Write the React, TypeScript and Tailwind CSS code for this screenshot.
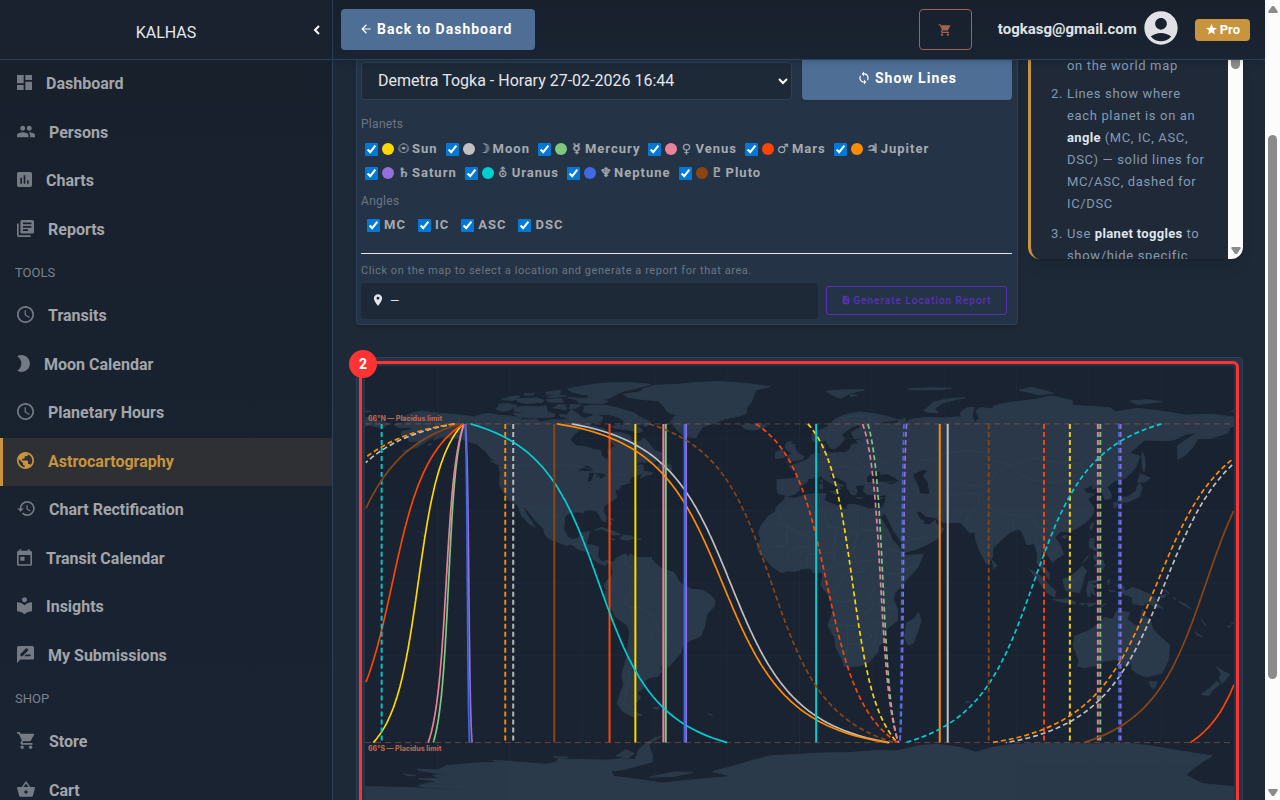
import React from 'react';
import type { IconType } from 'react-icons';
import {
  MdAccessTime,
  MdAccountCircle,
  MdArrowBack,
  MdBrightness2,
  MdDashboard,
  MdDescription,
  MdHistory,
  MdInsertChart,
  MdLibraryBooks,
  MdLocalLibrary,
  MdPeople,
  MdPlace,
  MdPublic,
  MdRateReview,
  MdShoppingBasket,
  MdShoppingCart,
  MdStar,
  MdSync,
  MdToday,
} from 'react-icons/md';

interface NavItem {
  label: string;
  icon: IconType;
  // part of the 24x24 icon grid that holds the glyph
  box: [number, number, number, number];
  active?: boolean;
}

interface Planet {
  name: string;
  glyph: string;
  color: string;
  mc: number;
  dec: number;
  thin?: boolean;
}

const mainItems: NavItem[] = [
  { label: 'Dashboard', icon: MdDashboard, box: [3, 3, 18, 18] },
  { label: 'Persons', icon: MdPeople, box: [1, 3, 22, 18] },
  { label: 'Charts', icon: MdInsertChart, box: [3, 3, 18, 18] },
  { label: 'Reports', icon: MdLibraryBooks, box: [2, 2, 20, 20] },
];

const toolItems: NavItem[] = [
  { label: 'Transits', icon: MdAccessTime, box: [2, 2, 20, 20] },
  { label: 'Moon Calendar', icon: MdBrightness2, box: [5, 2, 15, 20] },
  { label: 'Planetary Hours', icon: MdAccessTime, box: [2, 2, 20, 20] },
  { label: 'Astrocartography', icon: MdPublic, box: [2, 2, 20, 20], active: true },
  { label: 'Chart Rectification', icon: MdHistory, box: [1, 3, 21, 18] },
  { label: 'Transit Calendar', icon: MdToday, box: [3, 1, 18, 20] },
  { label: 'Insights', icon: MdLocalLibrary, box: [3, 2, 18, 20] },
  { label: 'My Submissions', icon: MdRateReview, box: [2, 2, 20, 20] },
];

const shopItems: NavItem[] = [
  { label: 'Store', icon: MdShoppingCart, box: [1, 2, 21, 20] },
  { label: 'Cart', icon: MdShoppingBasket, box: [1, 2, 22, 20] },
];

const planets: Planet[] = [
  { name: 'Sun', glyph: '☉', color: '#ffd700', mc: -68, dec: -8.05 },
  { name: 'Moon', glyph: '☽', color: '#c0c0c0', mc: 61.4, dec: 22.1 },
  { name: 'Mercury', glyph: '☿', color: '#7fc97f', mc: -55.4, dec: -2.8 },
  { name: 'Venus', glyph: '♀', color: '#e8829b', mc: -56.4, dec: -3.3, thin: true },
  { name: 'Mars', glyph: '♂', color: '#ff4500', mc: -78.7, dec: -12.3, thin: true },
  { name: 'Jupiter', glyph: '♃', color: '#ff8c00', mc: 58.1, dec: 22.5 },
  { name: 'Saturn', glyph: '♄', color: '#9370db', mc: -47, dec: 0.6 },
  { name: 'Uranus', glyph: '⛢', color: '#00ced1', mc: 6.9, dec: 19.6, thin: true },
  { name: 'Neptune', glyph: '♆', color: '#4169e1', mc: -47.6, dec: 0.4 },
  { name: 'Pluto', glyph: '♇', color: '#8b4513', mc: -101.6, dec: -19 },
];

const angles = ['MC', 'IC', 'ASC', 'DSC'];

// Coastlines as "lon,lat" pairs
const land = [
  // North America
  '-168,65.6 -166.5,66.3 -163,66.6 -162,67 -166.5,68.4 -163,69.5 -160,70.6 -156.6,71.3 -150,70.5 -141,69.7 -135,69 -131,70.1 -128,70.3 -124.5,69.6 -120,69.3 -115,68.5 -115.5,67.8 -109,68 -107.5,66.8 -102,67.8 -98,67.6 -96,68.2 -96,70.3 -94.5,72 -92.8,70.8 -91,69.5 -90,68.4 -88,68.5 -85,69.8 -81.5,69 -82,67 -86.5,66.3 -87,64.5 -91,63.5 -93,62 -94.7,60 -94.7,58.8 -92.5,57 -88,56.5 -85,55.3 -82.3,55.1 -82,52.9 -80,51.2 -78.8,52.5 -79.5,54.7 -76.6,57 -78.5,59 -77.5,62.5 -73.7,62.4 -70,61 -69.5,59 -66,58.8 -64.5,60.3 -62,57.5 -60,55 -57,54 -55.7,52.3 -58.5,51.3 -60,50.2 -66.5,50.2 -69,48.5 -65,49.2 -64.5,47.5 -64.8,46.5 -61,45.8 -61,45.2 -63.5,44.6 -66,43.5 -64.8,45.5 -67,44.8 -70,43.7 -70.7,42 -70,41.7 -74,40.6 -74.2,39.5 -75.2,38.7 -76.3,39 -76,37 -75.7,35.3 -77.8,34 -79.3,33 -81,31.8 -81.3,30 -80,27 -80.4,25.3 -81.8,26 -82.8,28 -84,30 -86,30.4 -89,30.3 -89.5,29.2 -91.5,29.5 -94.7,29.4 -97.2,27.7 -97.5,25 -97.8,22.5 -96,19.3 -94.5,18.2 -91.8,18.5 -90.5,20.8 -87,21.4 -87.7,18.5 -88.5,16 -86,15.9 -83.2,15 -83.7,11 -81.8,8.9 -79.6,9.5 -77.4,8.6 -78,7.3 -80,8.7 -80.5,7.4 -83,8.3 -85.6,9.9 -85.8,11 -87.6,13 -91.5,14 -94.5,16.2 -96.5,15.7 -100,17 -103.5,18.3 -105.5,20.2 -105.8,22.5 -109.2,25.8 -112.5,30 -114.7,31.7 -113,28.5 -111,25.5 -109.5,23.2 -112,24.7 -115,27.8 -116,30.3 -117,32.5 -120.6,34.5 -122.5,37.5 -124.3,40.4 -124,46 -124.7,48.3 -122.5,48.5 -127,51 -130,54.5 -133.5,57.5 -137,58.7 -141,60 -144,60 -148,60.6 -151.7,59.2 -150.5,61.2 -154,59.3 -158,56.5 -162.5,55 -164.5,54.7 -160,56 -157.3,58.8 -162,58.8 -162,60 -165,61.3 -164.7,63 -161,63.6 -161,64.5 -166,64.5',
  // Arctic islands
  '-118.5,70.4 -112,70.6 -118,71.3 -118,72.6 -114,73.3 -108,73 -105,73.5 -104.5,71 -101.5,70 -101.5,69 -105,68.6 -113,68.6 -117,69.2',
  '-125.5,72 -123,71.2 -120.5,71.6 -117,73.5 -121,74.5 -124.5,74.2',
  '-89.5,73.3 -85,73.8 -80.5,73.7 -76,72.8 -72,71.6 -68,70.4 -66.8,69.2 -62,66.9 -61.5,66.5 -63.5,64.8 -65.5,65.7 -68,66.3 -64.8,63.2 -66.5,62.3 -71.5,63.7 -77,64.3 -78,65 -73.5,65.5 -72.5,67.2 -75,68.7 -79,70 -85,70 -89.5,71 -89,73',
  '-96,76.9 -89.5,76.5 -83,76.3 -79.5,75.4 -81,74.5 -91.5,74.8 -92.5,76',
  '-91,78.3 -87,77.9 -88,76.9 -80,76.3 -78,77 -75.5,78.5 -72,79.8 -64.5,81.5 -61.5,82.4 -70,83.1 -80,83 -87,82.2 -92,81.2 -88,80.4 -85,79.5',
  '-96,80.5 -92,81.3 -87,80.4 -86,79 -88.5,78.3 -94,79',
  '-100,74 -97,73.8 -96.5,71.8 -102,72.7 -100.5,73.6',
  '-95,74 -90.5,73.9 -92,72.7 -95.3,72.2',
  '-105,76 -98.5,76.6 -98,75 -104,75.1',
  '-117,76.3 -109,76.8 -106,75.9 -106.5,75 -113,74.5 -117,75.3',
  '-123.5,76.2 -119,77.4 -116,77.6 -116.5,76.5 -119,75.7',
  '-105,79.2 -99,79.9 -99.5,78 -105,78.4',
  '-104.5,77.3 -100,77.9 -96.5,77.6 -103,76.9',
  '-114,78.5 -110,78.7 -110,78.1 -114,77.9',
  '-87,65.6 -81,64 -80.3,63.5 -85,63.1 -87,63.7',
  '-99.5,69.9 -96,69.6 -95.5,68.8 -99,69',
  // Greenland
  '-73,78.3 -66,79.3 -65,80.5 -60,82 -50,82.4 -44,83.1 -33,83.6 -22,82.8 -12,81.5 -18,80 -19,77.5 -20,75 -22,72.5 -22,70.5 -25,69.2 -31,68.1 -36,66 -40,65 -43,60.2 -48,61 -51,63.8 -53.6,67 -51,69.7 -54.5,70.7 -56,73 -58.5,75.6 -65,76.1 -71,77',
  // smaller Atlantic and Caribbean islands
  '-24.3,65.5 -20.5,65.7 -16,66.5 -13.6,65 -18.5,63.4 -22.5,63.9',
  '-59.2,47.8 -57.5,50.7 -55.5,51.5 -56,49.8 -53.2,49 -53,46.8 -56,47',
  '-128.3,50.8 -125,50 -123.4,48.4',
  '-85,22 -82,23.1 -77,21.5 -74.2,20.2 -77.5,19.9 -78.3,21 -82,22.5',
  '-74.3,18.4 -73,19.9 -69.8,19.7 -68.4,18.6 -71.5,17.8',
  '-78.3,18.4 -76.3,18.2 -77.2,17.8', '-67.2,18.5 -65.6,18.3 -67.1,18',
  '-78.5,25 -77.8,24 -78,25.2', '-77.5,26.8 -77,26 -78.5,26.6',
  '-156,20.2 -155,19.5 -155.8,19', '-158.2,21.5 -157.7,21.2 -158.2,21.3', '-156.7,21 -156,20.8 -156.5,20.6',
  '-153,57.9 -152.2,57.4 -154,57',
  // South America
  '-77.4,8.6 -75.5,10.8 -72,12.3 -71.5,10.8 -70,12.1 -68,10.7 -62,10.7 -60,8.5 -57,6 -52,4.5 -50,1 -48,-.8 -44.5,-2.5 -40,-2.9 -37,-4.8 -35,-7 -35.3,-9.5 -38.5,-13 -39.2,-17.5 -41,-22 -45,-23.5 -48.5,-26 -49,-28.5 -52.2,-32.5 -54.5,-34.8 -58,-34.2 -57,-36.5 -58.5,-38.5 -62,-39 -65,-41 -63.7,-42.5 -67.3,-45.5 -65.8,-47.5 -69,-51 -68.4,-52.5 -70.5,-53 -68.3,-53.3 -65.2,-54.7 -69,-55.3 -73,-53.3 -75.5,-50 -74.5,-46.5 -72.8,-42 -73.6,-38 -71.5,-30 -70.3,-20 -71.5,-17.3 -76.2,-14 -79,-8.2 -81.2,-5.5 -80,-3 -81,-1 -79.9,1 -77.3,3.8 -77.8,7',
  '-61,-51.5 -58,-51.4 -59,-52.3', '-38,-54 -36,-54.8 -37,-54.3', '-61.8,10.7 -61,10.7 -61.4,10.1',
  // Europe and Asia
  '-9.3,43 -9.3,38.6 -8.8,37 -6.3,36.6 -5.5,36 -2,36.8 0,38.8 -.3,39.5 3.2,42 3.5,43.3 7.5,43.8 9,44.4 10.5,42.9 15.5,40 16,38 17,39 16.6,40.3 18.5,40.2 14,42.5 12.4,44.5 13.7,45.6 15.2,44 19.5,41.8 19.5,40 21.5,36.8 23,36.5 24,38 23,40.3 26,40.8 27,40 26.3,38.3 28,36.7 30.6,36.8 32.5,36 36,36.8 35.5,33.7 34.3,31.3 32.4,31.2 32.6,29.9 34.3,27.8 35,29.4 37,26 39.2,21.5 42.6,16.5 43.4,12.7 48,14 52.2,15.7 55.3,17.4 57.8,19 59.8,22.5 56.5,24.7 56.3,26.2 54,24.2 51.5,24.3 51.3,26 50,26.5 48.3,29.6 50,30 52,27.9 56.5,27 58,25.6 62,25.1 66.5,25.3 68,23.7 70.5,20.9 72.7,21.3 73,18 74.8,13 77.5,8.1 79.8,10.3 80.2,14.5 82.3,16.7 87,21 91,22.5 92.3,21 94.3,16 97.3,16.5 98.7,12 98.3,8.5 100.3,6 103.4,1.4 103.5,4 101.3,6.8 99.8,9.5 100.2,13.3 102.5,12.1 104.9,8.6 106.8,10.4 109.3,12 108,15.8 105.8,19 108.3,21.6 110.5,21.3 114.2,22.4 119,25.5 121.8,28.8 121.8,31.5 119.3,35 122.5,37 119,37.3 117.7,39 121.5,40.8 121.3,39 124.7,40 125.3,37.7 126.6,34.5 129.2,35.2 129,37.5 127.5,39.8 130.8,42.5 135,43.5 139,47.5 141,52.5 137,54 143,59.3 152,59 155,59.3 160,61.7 164.5,62.5 161.8,60.5 156.5,57 156.8,51.2 160,53.2 163,56.5 165,59.9 170.5,60 177.5,62.3 178.5,64.5 180,65 180,68.9 171,70 160,69.7 152,71 140,72.5 131,71 128.5,72.8 113,73.7 113,75.7 104.5,77.7 98,76.2 87,75 80.5,73.5 80,72.2 75,72.8 73,71.4 74.5,68.5 72.5,66.5 71.5,70 72.5,72.8 69.5,72.8 66.7,70.8 67,69 60,68.5 54,68.8 46.5,68 43.5,66.3 44,68.4 41,67.5 41,66.6 34.5,65.3 38,64 34,66.7 41,67.7 36,69.2 31,70.2 25,71 19,69.9 14.5,67.8 11,64.5 5.2,62 5.3,59 8,58 10.7,59.3 12.5,56 14.3,55.6 16.5,57 18.9,60 17.2,61.5 21.5,64.5 24.5,65.8 25.3,64.8 21.4,62.5 22.5,60 29.5,60 23.5,59.2 24.3,57.8 21.5,57.5 21,55.5 19,54.3 14,54 10.9,54.1 10.5,57.5 8.2,56.8 8.7,53.9 5,53.3 3.5,51.4 1.6,50.5 -1.5,49.5 -4.7,48.4 -1.2,46 -1.7,43.4',
  '-180,68.8 -175,67.4 -170,66.2 -173,64.3 -178.5,65.5 -180,65', '-180,71.5 -177.5,71.2 -180,70.9',
  '-5.6,50 -3,50.7 1.3,51.2 1.7,52.7 -.2,53.5 -1.7,55.5 -2,57.5 -4,57.6 -3,58.6 -5,58.5 -6,56.5 -4.8,54.8 -3,54 -4.7,52.8 -5,51.7 -3,51.4',
  '-10,51.7 -6.3,52.2 -6,54.5 -7.5,55.3 -10,54.2',
  '11,79.6 18,80.1 27,80.2 21,78.7 17,76.6 13.5,78', '21,78.3 24,77.8 21,77.4',
  '45,80.6 55,81 63,80.8 58,80.2 48,80.1',
  '51.5,71.5 55.5,75 61,76.3 68.5,76.9 60,75 56,72.5 57.5,70.6 53.5,70.8',
  '91,80 96,81.2 105,78.8 99.5,78', '137,75.5 144,76 150,75.2 140,74', '178.7,71.3 180,71.5 180,70.9',
  '8.2,41 9.7,41 9.5,39.2 8.5,39', '8.6,42.5 9.4,43 9.4,41.5', '12.5,38 15.6,38.2 15.1,36.7', '23.6,35.5 26.2,35.2 24,35', '32.4,35 34.5,35.6 33,34.6',
  '142,54.3 143,52 143.3,49 142.7,46 142,48 141.8,52',
  '141.2,45.4 145.3,43.6 143.2,42 140,41.7 140.5,43.5', '141,41.4 142,39.6 140.8,36 138.5,34.7 135.5,33.6 131.5,33.9 133,35.4 136,35.8 139.5,38.2 140,40.5', '130,33.5 131.8,33.5 131.2,31.3 130.2,31.4', '132.5,33.8 134.5,34.3 133.5,33',
  '120.2,23 121.5,25.2 121.9,24.8 120.9,22', '108.7,19.3 110.9,20 110,18.4', '79.8,9.6 81.8,7.3 80.5,6',
  // South-east Asia
  '95.3,5.6 98,4.5 101,2 104,-1.5 106,-3.2 105.8,-5.8 102.5,-4 98.7,1.5',
  '105.3,-6.7 108.5,-6.6 111,-6.5 114.4,-7.8 114.3,-8.6 108,-7.7',
  '109,1.5 111.5,2.5 115,5 117,7 119,5.2 117.7,2.5 117.5,.8 116,-3.8 112,-3.4 110.2,-2.8',
  '119.8,.7 122,1 125,1.6 123,.4 120.3,.3 122.3,-1 123.2,-.8 121.5,-2 122.6,-5 121.5,-4.5 120.5,-2.8 120.3,-5.5 119.5,-5.4 119,-2.8',
  '120.5,18.5 122.2,18.4 121.6,15.8 124,13 122,13.8 120.3,14.8 120,16.3', '122,7 123.4,8.6 125.5,9.7 126.5,7.2 125.5,5.7 124,7', '122,11.8 123.5,11 123,9.5 124.5,10.5 125.5,12.3 125,11 122.8,9.2 121.9,10.5', '117.3,8.5 119.5,11.3 119,10',
  '119,-8.4 122.8,-8.2 122,-8.9 119.8,-9.8', '116,-8.3 118.7,-8.4 117,-9', '123.5,-10.2 127,-8.5 124.5,-10.1', '127.5,1 128.5,1.5 128,-.7', '128,-3 130.8,-3.3 129,-3.6',
  '131,-.8 134,-.9 135,-3.3 138,-1.7 145,-4.5 148,-6.5 147,-7.3 150.7,-10.5 147,-9.6 144,-7.8 142.5,-9.2 138,-8.4 138,-5.8 133,-4 133.5,-2.5',
  '148.5,-5.6 152,-4.5 151,-6', '151,-2.7 153,-4.5 152.5,-3.3', '155,-5.7 156,-6.6 155.4,-6.6', '157,-7.4 160,-8.7 162,-10.5 159,-8.9', '164,-20.2 167,-22.3 165,-21.7', '177.4,-17.7 178.6,-18 177.7,-18.2', '178.8,-16.8 180,-16.3 179.3,-16.9', '166.7,-15 167.2,-16.2 168.3,-17.5 166.9,-15.6',
  // Africa
  '-5.8,35.9 -2,35.2 3,36.8 10,37.3 11,37 10.2,34.2 15.3,32.3 19.5,30.5 20,32.7 23,32.7 29,30.9 32.4,31.2 32.5,30 34,26.5 37.2,21 38.5,18 43.2,12.5 43.3,11.5 51.2,11.9 49,6.5 43,0 39.5,-4 39,-7 40.7,-11 40.5,-15.5 35,-20 35.4,-23.8 32.8,-26 32.5,-28.5 29,-32.5 25.7,-34 20,-34.8 18.3,-34 18,-32 15.2,-27 14.5,-22.5 11.8,-17.5 13.8,-12 13.2,-8.5 12,-5 8.9,-1 9.6,2.3 9.5,4 8.5,4.7 6,4.3 4.5,6.3 1,5.9 -2,4.8 -4.5,5.2 -7.5,4.4 -11.5,7 -13.3,9.2 -16.7,12.5 -17.4,14.7 -16,18.5 -17,21 -15.5,24.5 -13,27.7 -10,29.6 -9.7,31.5 -6.8,34',
  '49.3,-12 50.4,-15.7 47.1,-25 44.8,-25.4 43.5,-22.5 44.4,-16.3 47.5,-14.7',
  // Oceania
  '114,-22 113.5,-26 115.8,-32 115,-34.3 118,-35 123.5,-33.9 126,-32.3 131.2,-31.5 135.5,-34.8 137.8,-32.7 137.5,-35.5 140,-37.5 143.5,-38.8 147,-38 150,-37.4 153,-31.5 153.2,-25.5 149.5,-22.3 146.2,-18.8 145.3,-15 143.5,-14.3 142.2,-10.8 140.8,-17.5 139,-17.4 135.7,-15 136.8,-12.2 131.5,-11.3 129.8,-14.9 128,-14.6 126.5,-14 122.3,-18 119,-20',
  '144.7,-40.8 148.3,-40.9 147,-43.6 146,-43.4',
  '172.8,-34.6 175.5,-36.5 178.3,-37.8 176.5,-40 175,-41.5 173.8,-39.3 174.7,-37.5', '172.7,-40.6 174.2,-41.7 171,-44.5 169.5,-46.6 166.5,-46 170.5,-43',
  '69,-48.8 70.5,-49.2 69,-49.7',
  // Antarctica
  '-180,-84.3 -165,-84.5 -150,-85.2 -137,-85.3 -155,-84.6 -158,-83.8 -150,-82 -158,-81 -149,-80.8 -152,-79.5 -146,-79.2 -158,-77.6 -158,-77 -150,-77.3 -146,-75.5 -135,-74.5 -118,-74 -105,-75 -101,-74 -100,-72.8 -90,-73 -80,-73.3 -74,-72.7 -68,-73 -67,-69.5 -65,-67.3 -60,-64 -57,-63.3 -59,-64.5 -62.5,-67 -61,-71 -61,-74 -72,-77 -78,-77.8 -77,-80 -65,-81.5 -57,-82.7 -45,-81.5 -28,-80 -36,-78 -30,-76.5 -20,-73.5 -12,-71.5 -3,-71 8,-70.3 20,-70.2 32,-69.3 40,-69.5 50,-67.2 57,-66.8 65,-67.7 70,-69 73,-70 80,-68 88,-66.8 100,-66.2 110,-66.3 122,-66.6 135,-66.2 145,-67.3 155,-69 163,-70.3 171,-71.5 167,-74 163,-77 160,-79.5 167,-83 180,-84.3 180,-90 -180,-90',
  '-76,-71.5 -72,-69 -68.5,-70.5 -71,-72.5', '-127,-73.5 -119,-73.7 -121,-74', '-102,-71.9 -96,-72 -98,-72.5', '-62,-80.3 -52,-80 -44,-78.3 -52,-78.2', '-164,-79 -159,-79.6 -162,-79.8',
];

const water = [
  '-92,46.7 -88,48.8 -84.7,46.7 -87.5,46.5', '-87.8,42 -87,45.7 -85,45.8 -86.3,42.5', '-84.5,46 -80,45 -82.5,43.2 -83.5,44', '-83,42 -79,42.8 -81,42.5', '-79.7,43.3 -76.4,44',
  '28,41.5 28,44 31,46.5 33.5,46 33,44.8 36.5,45.2 39,43.8 41.5,42 38,41 33.5,42',
  '47,45 51,47 53,46.5 51,44.5 53,42 53.8,37 50,37.3 49.3,40.3',
];

const borders = [
  '-141,60 -141,69.6', '-123,49 -95,49 -89,48 -84,46.5 -82.5,43 -79,43.3 -75,45 -71,45.2 -69,47.4 -67.5,45.5', '-117,32.5 -111,31.3 -106.5,31.7 -103,29 -99.5,27.5 -97.3,25.9',
  '-92,14.5 -91,17.8 -89,17.9', '-72,12 -72.5,8 -67.5,6 -67,1.2 -70,.5 -70,-4 -73,-7.5 -70.5,-10 -65.5,-10 -60,-14 -58,-20 -54.5,-22 -54.5,-25.7 -57.6,-30.2 -53.5,-33.7', '-69.5,-11 -69,-18 -67,-23 -70,-33 -71.7,-45 -73,-50 -68.5,-52', '-60,5 -60,2 -56,2 -52,4', '-62.5,-22 -57.8,-26', '-78.5,-3 -75,0 -78.5,1.3',
  '-8.7,27.7 -8.7,25 4,19 12,23.5 16,23 24,20 24,32', '25,22 37,22', '-2,35 -1,32 -8.7,28.7', '9,37 8,33.5 10,30 12,23.5', '-5,25 -5.5,15.5 -12,15', '4,19 3.5,15 0,15 -4,13 -5.5,10.5', '15.5,23 14,13 3.5,12 2.7,6.4', '14,13 15,7.5 9,4.5', '15.5,7.5 23,9 27,5 18.5,4 16.5,-1 12.3,-5', '24,20 22,13 24,9 34,10 36.5,14.5 42.4,12.6', '29.5,4.5 31,-1 29,-6 30.8,-8.3 28.5,-12.5 24,-11 22,-7 17,-8 13,-6', '34,4 42,4 48,8', '34,-1 39,-4.6', '31,-8.3 40,-11', '12,-17.3 24,-17.5 24,-13', '20,-18 20,-28.3 17,-28.5', '25,-18 30,-22 25.5,-25.5 20,-25', '32,-22 31,-26', '33,-10 35,-16 31,-16',
  '-1.8,43.3 3,42.4', '-7,42 -7,37.2', '2.5,51 6,49.5 8,49 7.5,47.5 7,44', '7,53 6.3,50 12.5,50 14.5,51 14.3,53.9', '12,47.5 16,48.5 22,48 28,45.5', '24,54 23.5,51 27,48.5 29.7,45.5', '28,60 28,56 31,52 35,50 39,47.5', '11.5,59 12.5,64 20,69 29,69.5 30,63', '27,41.7 42,42 45,37 44,33 48,30', '37,36.7 41,37 39,32 46,29', '42,17 52,19 55,23', '45,39.5 49,38.5', '54,37.5 61,36.5 61,31 62,25.5', '61,36 66,37.5 71,37 75,37 74,33 70,28 68.5,24.5',
  '50,51 55,51 61,54 70,55 77,54 80,51 87,49 80,45 80,42 74,40 68,41 56,41', '87,49 98,52 108,49.5 116,49.5 120,53 127,50 131,48 131,43', '87,49 91,45 97,42.7 105,41.7 111,43.5 119,46.7 116,49.5', '78,35 79,31 88,28 97,28 98,24 102,22.5 108,21.5', '88,26 89,22', '98,21 100,20 103,18 107,15 103,11', '98,18 99,13', '124.5,40 130,42.5', '141,-2.6 141,-9', '110,1 115,1.5 117,4',
];

const MAP_W = 870;
const MAP_H = 435;
const SCALE = MAP_W / 360;
const rad = Math.PI / 180;

const toX = (lon: number) => (lon + 180) * SCALE;
const toY = (lat: number) => (90 - lat) * SCALE;
const wrap = (lon: number) => ((((lon + 180) % 360) + 360) % 360) - 180;

// Rising (side = -1) or setting (side = 1) curve between the two Placidus limits
const horizonPath = (planet: Planet, side: number) => {
  let path = '';
  let prev: number | null = null;
  for (let lat = 66; lat >= -66; lat -= 1) {
    const hourAngle = Math.acos(-Math.tan(lat * rad) * Math.tan(planet.dec * rad)) / rad;
    const lon = wrap(planet.mc + side * hourAngle);
    const jumped = prev === null || Math.abs(lon - prev) > 180;
    path += `${jumped ? 'M' : 'L'}${toX(lon).toFixed(1)} ${toY(lat).toFixed(1)}`;
    prev = lon;
  }
  return path;
};

const meridianPath = (lon: number) => `M${toX(wrap(lon))} ${toY(66)}V${toY(-66)}`;

const WorldMap: React.FC = () => (
  <svg viewBox={`0 0 ${MAP_W} ${MAP_H}`} className="block w-full rounded bg-[#1a2332]" role="img" aria-label="Astrocartography map">
    <g transform={`translate(${MAP_W / 2} ${MAP_H / 2}) scale(${SCALE} ${-SCALE})`} strokeLinejoin="round">
      <g fill="#2b3a4a" stroke="#2b3a4a" strokeWidth="0.4">
        {land.map((points) => <polygon key={points} points={points} />)}
      </g>
      <g fill="#1a2332">
        {water.map((points) => <polygon key={points} points={points} />)}
      </g>
      <g fill="none" stroke="#314355" strokeWidth="0.3">
        {borders.map((points) => <polyline key={points} points={points} />)}
      </g>
    </g>
    <g stroke="#2b3d50" strokeWidth="1" opacity="0.2">
      {[-150, -120, -90, -60, -30, 0, 30, 60, 90, 120, 150].map((lon) => (
        <line key={lon} x1={toX(lon)} x2={toX(lon)} y1={0} y2={MAP_H} />
      ))}
      {[-60, -30, 0, 30, 60].map((lat) => (
        <line key={lat} x1={0} x2={MAP_W} y1={toY(lat)} y2={toY(lat)} />
      ))}
    </g>
    <g stroke="#c4694f" strokeWidth="1" strokeDasharray="6 4" opacity="0.45">
      <line x1={0} x2={MAP_W} y1={toY(66)} y2={toY(66)} />
      <line x1={0} x2={MAP_W} y1={toY(-66)} y2={toY(-66)} />
    </g>
    <g fill="none" strokeWidth="1.7">
      {planets.map((planet) => (
        <g key={planet.name} stroke={planet.color}>
          <path d={meridianPath(planet.mc)} strokeWidth="2" />
          <path d={meridianPath(planet.mc + 180)} strokeWidth="2" strokeDasharray="5 3" opacity="0.95" />
          <path d={horizonPath(planet, -1)} />
          <path d={horizonPath(planet, 1)} strokeDasharray="5 3" />
        </g>
      ))}
    </g>
    <g fill="#b5654f" fontSize="7" fontWeight="800" fontFamily="Inter, sans-serif">
      <text x={3} y={55}>66°N — Placidus limit</text>
      <text x={3} y={385}>66°S — Placidus limit</text>
    </g>
  </svg>
);

const NavGroup: React.FC<{ items: NavItem[]; className: string }> = ({ items, className }) => (
  <ul className={`flex flex-col justify-between ${className}`}>
    {items.map(({ label, icon: Icon, box, active }) => (
      <li key={label}>
        <a
          href="#"
          className={`flex h-12 items-center border-l-[3px] pl-[14px] text-base font-bold ${
            active ? 'border-[#c8943e] bg-[#2e3033] text-[#c8943e]' : 'border-transparent text-[#a2a5aa]'
          }`}
        >
          <Icon
            viewBox={box.join(' ')}
            className={`mr-[14px] mb-[3px] ${active ? '' : 'text-[#757b84]'}`}
            style={{ width: Math.round((box[2] * 5) / 6), height: Math.round((box[3] * 5) / 6) }}
          />
          {label}
        </a>
      </li>
    ))}
  </ul>
);

const Sidebar: React.FC = () => (
  <aside className="flex w-[333px] shrink-0 flex-col border-r border-[#2b4059] bg-gradient-to-b from-[#17202b] to-[#1a2332]">
    <div className="flex h-[60px] shrink-0 items-center border-b border-[#2b4059] bg-[#1a2230]">
      <span className="flex-1 pt-[6px] text-center text-base text-[#e4e6ea]">KALHAS</span>
      <button aria-label="Collapse menu" className="mr-[11px] -ml-[19px] text-white">
        <svg viewBox="0 0 8 10" className="w-2 fill-none stroke-current stroke-2">
          <path d="M6 1L2 5l4 4" />
        </svg>
      </button>
    </div>
    <nav className="min-h-0 flex-1 overflow-hidden">
      <NavGroup items={mainItems} className="h-[194px]" />
      <h2 className="flex h-[38px] items-center pl-[15px] text-[13px] text-[#7b828c]">TOOLS</h2>
      <NavGroup items={toolItems} className="h-[388px]" />
      <h2 className="flex h-[38px] items-center pl-[15px] text-[13px] text-[#7b828c]">SHOP</h2>
      <NavGroup items={shopItems} className="h-[97px]" />
    </nav>
  </aside>
);

const Header: React.FC = () => (
  <header className="z-10 flex h-[60px] shrink-0 items-center border-b border-[#2b4059] bg-gradient-to-b from-[#18202c] to-[#1a2332] pr-[15px] pl-2 shadow-md">
    <button className="flex h-[41px] items-center gap-1 rounded bg-[#4e6e95] pr-[23px] pb-[2px] pl-[18px] text-sm font-bold tracking-[1px] text-white">
      <MdArrowBack className="h-[14px] w-[14px]" />
      Back to Dashboard
    </button>
    <button aria-label="Cart" className="ml-auto flex h-[41px] w-[53px] items-center justify-center rounded border border-[#a3624f] text-[#a3624f]">
      <MdShoppingCart className="h-[14px] w-[14px]" />
    </button>
    <a href="#" className="ml-[26px] flex items-center gap-1 text-[15px] font-bold text-[#dfe1e5]">
      togkasg@gmail.com
      <MdAccountCircle className="mb-1 h-10 w-10" />
    </a>
    <span className="ml-[14px] flex h-[22px] items-center gap-[2px] rounded bg-[#c8943e] px-[10px] text-[13px] font-bold text-white">
      <MdStar className="h-[13px] w-[13px]" />
      Pro
    </span>
  </header>
);

const Controls: React.FC = () => (
  <section className="flex-1 rounded-b border border-t-0 border-[#2b4059] bg-[#243446] px-[5px] pb-[5px] pl-1 shadow-md">
    <div className="flex gap-[10px]">
      <div className="relative mt-[2px] flex-1">
        <select aria-label="Chart" className="h-[38px] w-full appearance-none rounded border border-[#2d4158] bg-[#1e2938] px-4 text-base text-[#e4e6ea]">
          <option>Demetra Togka - Horary 27-02-2026 16:44</option>
        </select>
        <svg viewBox="0 0 10 7" className="pointer-events-none absolute top-4 right-1 w-[10px] fill-none stroke-white stroke-2">
          <path d="M1 1l4 4 4-4" />
        </svg>
      </div>
      <button className="flex h-10 w-[210px] items-center justify-center gap-1 rounded-b bg-[#4e6e95] pb-1 text-sm font-bold tracking-[1px] text-white shadow">
        <MdSync className="h-[14px] w-[14px]" />
        Show Lines
      </button>
    </div>

    <h3 className="mt-4 text-xs tracking-wide text-[#6b7684]">Planets</h3>
    <div className="mt-[5px] flex flex-wrap gap-x-2 pl-1 text-[13px] font-bold tracking-[1px] text-[#a6aab0]">
      {planets.map((planet) => (
        <label key={planet.name} className="flex h-6 items-center gap-1">
          <input type="checkbox" defaultChecked className="h-[13px] w-[13px] accent-[#0078d7]" />
          <span className="h-3 w-3 rounded-full" style={{ backgroundColor: planet.color }} />
          <span
            className={`flex w-[10px] justify-center tracking-normal ${
              planet.thin ? 'font-normal' : '[text-shadow:1px_0_0_currentColor]'
            }`}
          >
            {planet.glyph}
          </span>
          {planet.name}
        </label>
      ))}
    </div>

    <h3 className="mt-2 text-xs tracking-wide text-[#6b7684]">Angles</h3>
    <div className="mt-1 flex gap-3 pl-[6px] text-[13px] font-bold tracking-[1px] text-[#a6aab0]">
      {angles.map((angle) => (
        <label key={angle} className="flex h-6 items-center gap-1">
          <input type="checkbox" defaultChecked className="h-[13px] w-[13px] accent-[#0078d7]" />
          {angle}
        </label>
      ))}
    </div>

    <hr className="mt-4 border-[#e4e6ea]" />
    <p className="mt-[9px] text-[11px] leading-4 tracking-wider text-[#6b7684]">
      Click on the map to select a location and generate a report for that area.
    </p>
    <div className="mt-1 flex items-center gap-2 pr-[5px]">
      <div className="flex h-9 flex-1 items-center gap-[5px] rounded bg-[#1e2938] px-[10px] text-xs text-[#e4e6ea]">
        <MdPlace className="mb-[2px] h-[14px] w-[14px]" />
        —
      </div>
      <button className="mb-[2px] flex h-[29px] w-[181px] items-center justify-center gap-[2px] rounded-[3px] border border-[#5a31b4] text-[10px] font-medium tracking-widest text-[#5a31b4]">
        <MdDescription className="h-[10px] w-[10px]" />
        Generate Location Report
      </button>
    </div>
  </section>
);

const Guide: React.FC = () => (
  <aside className="flex h-[199px] w-[215px] overflow-hidden rounded-b-xl border-l-[3px] border-[#c8943e] bg-[#1f2937] shadow-lg">
    <ol className="-mt-[5px] flex-1 list-decimal pl-9 text-[13px] leading-[22px] tracking-wider text-[#849ab4]">
      <li className="mb-[6px] list-none">on the world map</li>
      <li value={2} className="mb-2">
        Lines show where<br />each planet is on an<br /><b className="tracking-wide text-[#dfe5ee]">angle</b> (MC, IC, ASC,<br />DSC) — solid lines for<br />MC/ASC, dashed for<br />IC/DSC
      </li>
      <li value={3}>
        Use <b className="tracking-wide text-[#dfe5ee]">planet toggles</b> to<br />show/hide specific
      </li>
    </ol>
    <div className="flex w-[15px] flex-col items-center justify-between bg-[#fcfcfc] pb-1">
      <div className="h-[9px] w-[9px] rounded-b-full bg-[#8b8b8b]" />
      <svg viewBox="0 0 10 8" className="w-[10px] fill-[#8b8b8b]"><path d="M1 0h8l1 1-4 6H4L0 1z" /></svg>
    </div>
  </aside>
);

const PageScrollbar: React.FC = () => (
  <div className="flex w-[15px] shrink-0 flex-col items-center bg-[#fcfcfc] pt-[5px] pb-[3px]">
    <svg viewBox="0 0 10 8" className="w-[10px] fill-[#8b8b8b]"><path d="M1 8h8l1-1-4-6H4L0 7z" /></svg>
    <div className="grow-[122]" />
    <div className="w-[9px] grow-[544] rounded-full bg-[#8b8b8b]" />
    <div className="grow-[110]" />
    <svg viewBox="0 0 10 8" className="w-[10px] fill-[#8b8b8b]"><path d="M1 0h8l1 1-4 6H4L0 1z" /></svg>
  </div>
);

const App: React.FC = () => {
  return (
    <div className="flex h-screen overflow-hidden bg-[#1e2938] font-[Roboto,'DejaVu_Sans',sans-serif]">
      <Sidebar />
      <div className="flex min-w-0 flex-1 flex-col">
        <Header />
        <main className="min-h-0 flex-1 overflow-hidden pr-[22px] pl-[23px]">
          <div className="flex items-start gap-[10px]">
            <Controls />
            <Guide />
          </div>

          <section className="relative mt-8 rounded border border-[#2b4059] bg-[#243446] p-2">
            <WorldMap />
            {/* Tour step highlight */}
            <div className="pointer-events-none absolute inset-[3px] left-[2px] rounded-md border-[3px] border-[#ff3333]" />
            <span className="absolute -top-2 -left-2 flex h-7 w-7 items-center justify-center rounded-full bg-[#ff3333] text-sm font-bold text-white">
              2
            </span>
          </section>
        </main>
      </div>
      <PageScrollbar />
    </div>
  );
};

export default App;
